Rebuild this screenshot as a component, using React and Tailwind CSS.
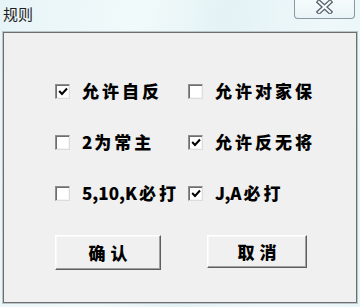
import React, { useState } from "react";

const cjk = { fontFamily: '"Noto Sans CJK SC", "Noto Sans", sans-serif' };

const options = [
  { label: "允许自反", checked: true },
  { label: "允许对家保", checked: false },
  { label: "2为常主", checked: false },
  { label: "允许反无将", checked: true },
  { label: "5,10,K必打", checked: false },
  { label: "J,A必打", checked: true },
];

// latin runs get tighter spacing than the CJK glyphs
const Label = ({ text }) =>
  text.split(/([\x00-\x7f]+)/).filter(Boolean).map((part, i) =>
    /^[\x00-\x7f]+$/.test(part) ? (
      <span key={i} className="tracking-[0px] mr-[2px]">{part}</span>
    ) : (
      <span key={i} className="tracking-[3px]">{part}</span>
    )
  );

const CheckBox = ({ checked, label, onToggle }) => (
  <label className="flex items-center h-[24px] cursor-default select-none whitespace-nowrap" onClick={onToggle}>
    <span className="shrink-0 w-[15px] h-[15px] flex items-center justify-center bg-white border border-t-[#8e8e8e] border-l-[#8e8e8e] border-r-[#dcdcdc] border-b-[#dcdcdc] shadow-[inset_1px_1px_0_#6e6e6e,inset_-1px_-1px_0_#f4f4f4]">
      {checked && (
        <svg width="10" height="9" viewBox="0 0 10 9">
          <path d="M1.2 4 L4 7 L9 1.5" fill="none" stroke="#000" strokeWidth="2" />
        </svg>
      )}
    </span>
    <span className="ml-[12px] text-[17px] leading-[24px] font-black text-black" style={cjk}>
      <Label text={label} />
    </span>
  </label>
);

const Btn = ({ children, className }) => (
  <button
    className={
      "flex items-center justify-center bg-[#f0f0f0] border border-t-white border-l-white border-r-[#5e5e5e] border-b-[#5e5e5e] shadow-[inset_-1px_-1px_0_#a0a0a0,inset_1px_1px_0_#f8f8f8] text-[17px] font-black tracking-[5px] pl-[5px] text-black " +
      className
    }
    style={cjk}
  >
    {children}
  </button>
);

export default function App() {
  const [opts, setOpts] = useState(options);
  const toggle = (i) =>
    setOpts(opts.map((o, j) => (j === i ? { ...o, checked: !o.checked } : o)));

  return (
    <div className="w-[360px] h-[307px] flex flex-col px-[3px] pb-[4px] bg-[linear-gradient(100deg,#e7f4f7_0%,#f1fafb_35%,#e4f2f5_55%,#eef8fa_80%,#e9f6f8_100%)]">
      {/* title bar */}
      <div className="h-[32px] flex items-start justify-between">
        <span className="mt-[4px] text-[15px] leading-[20px] text-[#1e1e1e]" style={cjk}>
          规则
        </span>
        <div className="w-[61px] h-[19px] mr-[2px] flex justify-center items-start border border-t-0 border-[#8a98a3] rounded-b-[4px] bg-[linear-gradient(#f6fbfc,#e9f4f7)]">
          <svg width="17" height="14" viewBox="0 0 17 14">
            <g strokeLinecap="square">
              <path d="M3 2 L14 12 M14 2 L3 12" stroke="#5b6570" strokeWidth="4.6" />
              <path d="M3 2 L14 12 M14 2 L3 12" stroke="#fbfcfd" strokeWidth="2" />
            </g>
          </svg>
        </div>
      </div>

      {/* client area */}
      <div className="flex-1 flex flex-col bg-[#f0f0f0] border border-[#6e6e6e] shadow-[0_0_0_1px_#bcc6ca]">
        <div className="pl-[51px] pt-[46px] grid grid-cols-[133px_1fr] gap-y-[27px]">
          {opts.map((o, i) => (
            <CheckBox key={i} label={o.label} checked={o.checked} onToggle={() => toggle(i)} />
          ))}
        </div>
        <div className="pl-[51px] mt-[30px] flex items-start gap-[46px]">
          <Btn className="w-[106px] h-[35px]">确认</Btn>
          <Btn className="w-[100px] h-[33px]">取消</Btn>
        </div>
      </div>
    </div>
  );
}
